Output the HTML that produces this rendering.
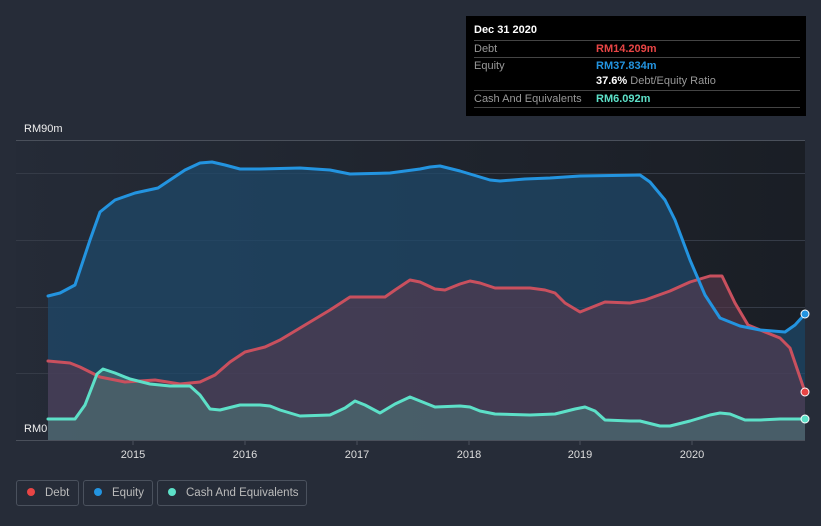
<!DOCTYPE html>
<html><head><style>
html,body{margin:0;width:821px;height:526px;overflow:hidden}
body{background:#262c38;font-family:"Liberation Sans",sans-serif;position:relative}
.tt{position:absolute;left:466px;top:16px;width:340px;height:100px;background:#000;color:#fff;font-size:11px}
.tt .r{position:absolute;left:8px;right:6px;height:16px;border-top:1px solid #444;color:#999;line-height:16px}
.tt b{font-weight:bold}
.leg{position:absolute;top:480px;height:26px;border:1px solid #4a515d;border-radius:3px;color:#bbb;font-size:11.5px;line-height:24px;box-sizing:border-box;white-space:nowrap;overflow:hidden}
.leg i{display:inline-block;width:8px;height:8px;border-radius:50%;margin:0 10px 0 10px;vertical-align:0}
</style></head><body>
<svg width="821" height="526" style="position:absolute;left:0;top:0">
<defs><linearGradient id="bg" x1="0" y1="0" x2="1" y2="0"><stop offset="0" stop-color="#252b37"/><stop offset="1" stop-color="#1a1e25"/></linearGradient></defs>
<rect x="16" y="140" width="789" height="300" fill="url(#bg)"/>
<g stroke="#353b47" stroke-width="1"><line x1="16" y1="140.5" x2="805" y2="140.5" stroke="#4a505b"/><line x1="16" y1="173.5" x2="805" y2="173.5"/><line x1="16" y1="240.5" x2="805" y2="240.5"/><line x1="16" y1="307.5" x2="805" y2="307.5"/><line x1="16" y1="373.5" x2="805" y2="373.5"/><line x1="16" y1="440.5" x2="805" y2="440.5" stroke="#4a505b"/></g>
<polygon fill="#1e4a6c" fill-opacity="0.7" points="48,440 48,296 60,293 75,285 90,240 100,212 115,200 135,193 158,188 170,180 185,170 200,163 212,162 225,165 240,169 260,169 300,168 330,170 350,174 390,173 420,169 430,167 440,166 460,171 490,180 500,181 525,179 550,178 580,176 640,175 650,182 665,200 675,220 690,260 705,295 720,318 740,326 760,330 785,332 795,325 805,314 805,440"/>
<polygon fill="#5a3a4e" fill-opacity="0.6" points="48,440 48,361 70,363 80,367 100,377 125,382 155,380 180,384 200,382 215,375 230,362 245,352 265,347 280,340 300,328 330,310 350,297 370,297 385,297 395,290 410,280 420,282 435,289 445,290 460,284 470,281 480,283 495,288 530,288 545,290 555,293 565,303 580,312 595,306 605,302 630,303 645,300 670,291 690,282 710,276 722,276 735,303 748,325 765,332 780,338 790,348 805,392 805,440"/>
<polygon fill="#4e7a7a" fill-opacity="0.55" points="48,440 48,419 75,419 85,405 97,374 103,369 115,373 130,379 150,384 170,386 190,386 200,395 210,409 220,410 240,405 260,405 270,406 280,410 300,416 330,415 345,408 355,401 365,405 380,413 395,404 410,397 420,401 435,407 460,406 470,407 480,411 495,414 530,415 555,414 575,409 585,407 595,411 605,420 630,421 640,421 660,426 670,426 690,421 710,415 720,413 730,414 745,420 760,420 780,419 805,419 805,440"/>
<g fill="none" stroke-width="3" stroke-linejoin="round" stroke-linecap="round">
<polyline stroke="#c9505e" points="48,361 70,363 80,367 100,377 125,382 155,380 180,384 200,382 215,375 230,362 245,352 265,347 280,340 300,328 330,310 350,297 370,297 385,297 395,290 410,280 420,282 435,289 445,290 460,284 470,281 480,283 495,288 530,288 545,290 555,293 565,303 580,312 595,306 605,302 630,303 645,300 670,291 690,282 710,276 722,276 735,303 748,325 765,332 780,338 790,348 805,392"/>
<polyline stroke="#2394e0" points="48,296 60,293 75,285 90,240 100,212 115,200 135,193 158,188 170,180 185,170 200,163 212,162 225,165 240,169 260,169 300,168 330,170 350,174 390,173 420,169 430,167 440,166 460,171 490,180 500,181 525,179 550,178 580,176 640,175 650,182 665,200 675,220 690,260 705,295 720,318 740,326 760,330 785,332 795,325 805,314"/>
<polyline stroke="#5de0c8" points="48,419 75,419 85,405 97,374 103,369 115,373 130,379 150,384 170,386 190,386 200,395 210,409 220,410 240,405 260,405 270,406 280,410 300,416 330,415 345,408 355,401 365,405 380,413 395,404 410,397 420,401 435,407 460,406 470,407 480,411 495,414 530,415 555,414 575,409 585,407 595,411 605,420 630,421 640,421 660,426 670,426 690,421 710,415 720,413 730,414 745,420 760,420 780,419 805,419"/>
</g>
<circle cx="805" cy="314" r="4" fill="#2394e0" stroke="#fff" stroke-width="1"/>
<circle cx="805" cy="392" r="4" fill="#e84545" stroke="#fff" stroke-width="1"/>
<circle cx="805" cy="419" r="4" fill="#5de0c8" stroke="#fff" stroke-width="1"/>
<g stroke="#4a505b"><line x1="133" y1="440" x2="133" y2="445"/><line x1="245" y1="440" x2="245" y2="445"/><line x1="357" y1="440" x2="357" y2="445"/><line x1="469" y1="440" x2="469" y2="445"/><line x1="580" y1="440" x2="580" y2="445"/><line x1="692" y1="440" x2="692" y2="445"/></g>
<g fill="#ddd" font-size="11" text-anchor="middle" font-family="Liberation Sans"><text x="133" y="458">2015</text><text x="245" y="458">2016</text><text x="357" y="458">2017</text><text x="469" y="458">2018</text><text x="580" y="458">2019</text><text x="692" y="458">2020</text></g>
<g fill="#eee" font-size="11" font-family="Liberation Sans"><text x="24" y="132">RM90m</text><text x="24" y="432">RM0</text></g>
</svg>
<div class="tt">
<div style="position:absolute;left:8px;top:8px;font-weight:bold">Dec 31 2020</div>
<div class="r" style="top:24px">Debt<span style="position:absolute;left:122px;color:#e84545;font-weight:bold">RM14.209m</span></div>
<div class="r" style="top:41px">Equity<span style="position:absolute;left:122px;color:#2394e0;font-weight:bold">RM37.834m</span></div>
<div class="r" style="top:57px;border:0"><span style="position:absolute;left:122px;color:#999"><b style="color:#fff">37.6%</b> Debt/Equity Ratio</span></div>
<div class="r" style="top:74px;border-bottom:1px solid #444">Cash And Equivalents<span style="position:absolute;left:122px;color:#5de0c8;font-weight:bold">RM6.092m</span></div>
</div>
<div class="leg" style="left:16px;width:63px"><i style="background:#e84545"></i>Debt</div>
<div class="leg" style="left:83px;width:70px"><i style="background:#2394e0"></i>Equity</div>
<div class="leg" style="left:157px;width:150px"><i style="background:#5de0c8"></i>Cash And Equivalents</div>
</body></html>
